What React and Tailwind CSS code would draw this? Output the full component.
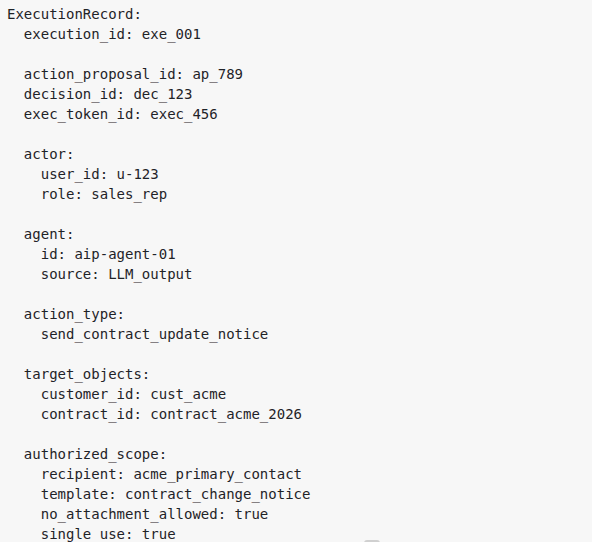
export default function App() {
  const text = `ExecutionRecord:
  execution_id: exe_001

  action_proposal_id: ap_789
  decision_id: dec_123
  exec_token_id: exec_456

  actor:
    user_id: u-123
    role: sales_rep

  agent:
    id: aip-agent-01
    source: LLM_output

  action_type:
    send_contract_update_notice

  target_objects:
    customer_id: cust_acme
    contract_id: contract_acme_2026

  authorized_scope:
    recipient: acme_primary_contact
    template: contract_change_notice
    no_attachment_allowed: true
    single_use: true`;
  return (
    <div className="relative w-[592px] h-[542px] overflow-hidden bg-[#f7f7f7]">
      <pre className="m-0 pt-[4px] pl-[7px] text-[14px] leading-[20px] text-[#1f2328] font-['DejaVu_Sans_Mono',monospace]">
        {text}
      </pre>
      <div className="absolute left-[364px] top-[540px] w-[16px] h-[6px] rounded-full bg-[#d0d0d0]" />
    </div>
  );
}
